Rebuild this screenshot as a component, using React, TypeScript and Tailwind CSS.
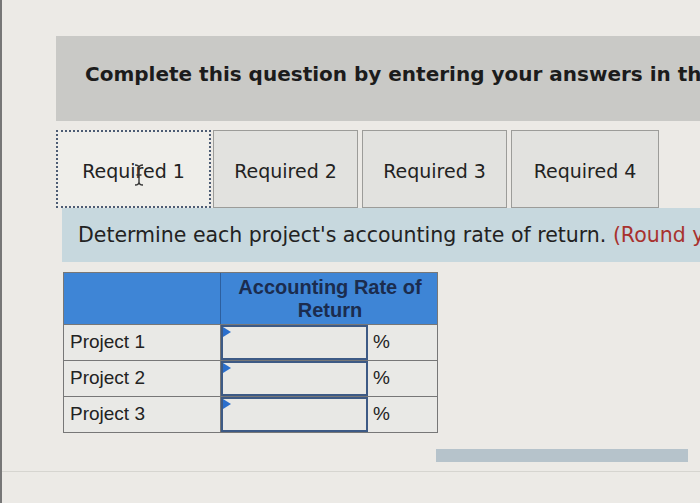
const tabs = [
  { label: "Required 1", w: "w-[155px]", active: true },
  { label: "Required 2", w: "w-[145px]", active: false },
  { label: "Required 3", w: "w-[145px]", active: false },
  { label: "Required 4", w: "w-[148px]", active: false },
];

const projects = ["Project 1", "Project 2", "Project 3"];

function AnswerRow({ name }: { name: string }) {
  return (
    <div className="grid h-[36px] grid-cols-[157px_147px_71px] border-t border-[#777]">
      <div className="flex items-center border-r border-[#777] pl-[6px] text-[19px] text-[#222]">
        {name}
      </div>
      <div className="relative border-2 border-[#3d5a85] bg-[#e8e8e5]">
        <span className="absolute left-0 top-0 h-0 w-0 border-y-[5px] border-l-[8px] border-y-transparent border-l-[#2b6fcc]" />
      </div>
      <div className="flex items-center pl-[5px] text-[19px] text-[#222]">%</div>
    </div>
  );
}

export default function App() {
  return (
    <main
      className="relative h-[503px] w-[700px] overflow-hidden border-l-2 border-[#777] bg-[#eceae6]"
      style={{ fontFamily: '"DejaVu Sans", Verdana, sans-serif' }}
    >
      <div className="pt-[36px] pl-[54px]">
        <div className="flex h-[85px] items-center overflow-hidden whitespace-nowrap bg-[#c9c9c6] pb-[10px] pl-[29px] text-[20px] font-bold text-[#1c1c1c]">
          Complete this question by entering your answers in the tabs below.
        </div>

        <div className="mt-[9px] flex h-[78px] gap-[2px]">
          {tabs.map((t, i) => (
            <div
              key={t.label}
              className={
                t.active
                  ? "relative flex w-[155px] items-center justify-center border-2 border-dotted border-[#4d5c74] bg-[#efeeea] pt-[4px] text-[19px] text-[#222]"
                  : `flex ${t.w} items-center justify-center border border-[#9c9c99] bg-[#e2e2df] pt-[4px] text-[19px] text-[#222] ${i > 1 ? "ml-[2px]" : ""}`
              }
            >
              {t.label}
              {t.active && (
                <svg
                  className="absolute left-[76px] top-[32px]"
                  width="10"
                  height="22"
                  viewBox="0 0 10 22"
                  fill="none"
                  stroke="#333"
                  strokeWidth="1.4"
                >
                  <path d="M1 1c2 0 4 1 4 3v14c0 2-2 3-4 3M9 1c-2 0-4 1-4 3M9 21c-2 0-4-1-4-3M2.5 11h5" />
                </svg>
              )}
            </div>
          ))}
        </div>

        <div className="ml-[6px] flex h-[54px] items-center whitespace-nowrap bg-[#c7d8de] pl-[16px] text-[20.5px] text-[#222]">
          Determine each project's accounting rate of return.&nbsp;
          <span className="text-[#a8322e]">(Round your answers to 1 decimal place.)</span>
        </div>

        <div
          className="ml-[7px] mt-[10px] w-[375px] border border-[#777] bg-[#e9e9e6]"
          style={{ fontFamily: '"Liberation Sans", Arial, sans-serif' }}
        >
          <div className="grid h-[51px] grid-cols-[157px_218px] bg-[#3e85d6]">
            <div className="border-r border-[#2d5f9e]" />
            <div className="flex items-center justify-center text-center text-[20px] font-bold leading-[23px] text-[#1b2c4e]">
              Accounting Rate of
              <br />
              Return
            </div>
          </div>
          {projects.map((p) => (
            <AnswerRow key={p} name={p} />
          ))}
        </div>

        <div className="ml-[380px] mt-[16px] h-[13px] w-[252px] bg-[#b6c3cb]" />
      </div>
      <div className="mt-[9px] h-px w-full bg-[#d6d5d0]" />
    </main>
  );
}
